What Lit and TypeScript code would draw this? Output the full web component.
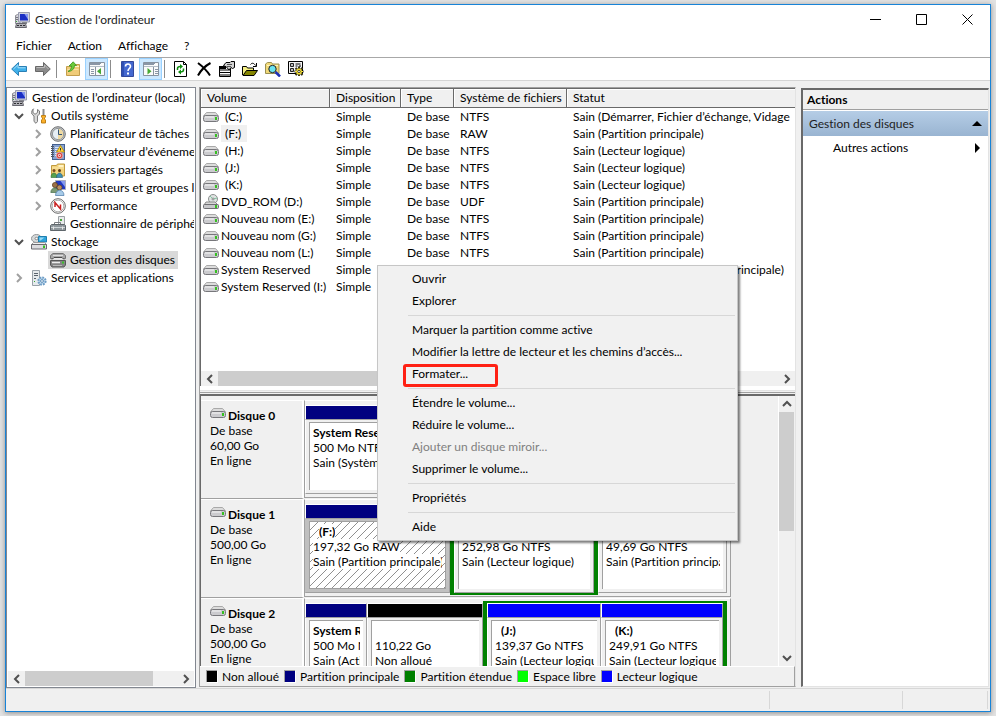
import { LitElement, html, svg, css, nothing, TemplateResult } from "lit";
import { customElement } from "lit/decorators.js";
import { classMap } from "lit/directives/class-map.js";
import { styleMap } from "lit/directives/style-map.js";

const icon = (body: unknown, w = 16, h = 16) =>
  html`<svg class="ico" width=${w} height=${h} viewBox="0 0 ${w} ${h}" aria-hidden="true">${body}</svg>`;

const computerIcon = icon(svg`
  <path d="M1.500 3.500l2-1H6v9H1.500z" fill="#d5d5dc" stroke="#8b8b93"/>
  <path d="M2 5.500h2M2 7.500h2" stroke="#77777f"/>
  <rect x="2" y="9" width="1" height="1" fill="#3a3"/>
  <path d="M4.500.5h11v9.500h-11z" fill="#d2d4de" stroke="#9a9db0"/>
  <path d="M6 2h8v6.500H6z" fill="#1b2fc4"/>
  <path d="M10.500 2H14v5.500z" fill="#8597ee"/>
  <path d="M8 10h5v2H8z" fill="#85878f"/>
  <path d="M2.500 11.500h9l1 4H1.500z" fill="#b0b0b6" stroke="#66666e"/>
  <path d="M3 13.500h2M6 13.500h2M9 13.500h2" stroke="#2f2f33"/>`);

const driveIcon = icon(svg`
  <path d="M3.500.5h9l3 3.500H.5z" fill="#dcdcdc" stroke="#a9a9a9"/>
  <rect x=".5" y="3.500" width="15" height="6" rx="2" fill="#cbcbce" stroke="#77777b"/>
  <path d="M2 5h9" stroke="#f8f8f8"/>
  <rect x="12" y="5" width="2" height="3" fill="#35c020"/>`, 16, 10);

const dvdIcon = icon(svg`
  <circle cx="10" cy="5" r="4.500" fill="#dfe3e2" stroke="#8d9190"/>
  <path d="M10 5L7 2M10 5l4-1" stroke="#7fc8a0"/>
  <circle cx="10" cy="5" r="1" fill="#fff" stroke="#888"/>
  <path d="M3 8h9l3 3H1z" fill="#d8d8d8" stroke="#8a8a8a"/>
  <rect x=".5" y="10.500" width="15" height="4" rx="1" fill="#c8c8cb" stroke="#6f6f73"/>
  <rect x="12" y="11" width="2" height="3" fill="#35c020"/>`, 16, 15);

const toolsIcon = icon(svg`
  <path d="M2.500.8L2 1.500v3l2 1.800L6.500 4.500v-3L8.500 3v3L6.500 8v5.500L5 15.300 3 13.500V8L.8 6V3z" fill="#d9d9d9" stroke="#707070" stroke-width=".9"/>
  <path d="M12.500 1v6" stroke="#8d8d8d" stroke-width="2"/>
  <path d="M10.500 7.500h4v1.500l-1 1v1l1 1v3h-4v-3l1-1v-1l-1-1z" fill="#fbb02a" stroke="#b8770a" stroke-width=".9"/>`);

const clockIcon = icon(svg`
  <circle cx="8" cy="8" r="7.300" fill="#c3c5c7" stroke="#6f7173"/>
  <circle cx="8" cy="8" r="5.600" fill="#e6eef5" stroke="#8f9497"/>
  <path d="M8 2.800a5.200 5.200 0 0 1 0 10.400z" fill="#eed9a2"/>
  <path d="M8.500 3.500v5H12" fill="none" stroke="#33557a"/>`);

const eventIcon = icon(svg`
  <rect x="2.500" y=".5" width="12" height="15" fill="#86a2d2" stroke="#44608f"/>
  <path d="M5 3.500h4M5 5.500h3M5 7.500h2M5 9.500h2M5 11.500h2" stroke="#dfe9f8"/>
  <path d="M1 2.500h3M1 4.500h3M1 6.500h3M1 8.500h3M1 10.500h3M1 12.500h3" stroke="#50555e"/>
  <path d="M10.500 1.500l4 6.500h-8z" fill="#ffd83a" stroke="#ab8300" stroke-width=".8"/>
  <path d="M10.500 4v2.500" stroke="#333"/>
  <circle cx="9.500" cy="11.500" r="3.200" fill="#d8352f" stroke="#f3c9c6" stroke-width=".7"/>
  <circle cx="9.500" cy="11.500" r="1.200" fill="none" stroke="#fff"/>`);

const sharedIcon = icon(svg`
  <path d="M1.500 3.500h5l1-1.500h7v12h-13z" fill="#f3d27a" stroke="#c09a3e"/>
  <path d="M8.500 3h5v2h-5z" fill="#fff3c4"/>
  <path d="M2 6h12" stroke="#fae7ac"/>
  <circle cx="4" cy="8.500" r="1.500" fill="#7a4b20"/>
  <path d="M1 15.500c0-6 6-6 6 0z" fill="#55a14e" stroke="#2f6a35" stroke-width=".6"/>
  <circle cx="9.500" cy="8.500" r="1.500" fill="#5d3a18"/>
  <path d="M6.500 15.500c0-6 6-6 6 0z" fill="#3f8fb0" stroke="#235e7a" stroke-width=".6"/>`);

const usersIcon = icon(svg`
  <path d="M5.500.5h10v9h-10z" fill="#2038c0" stroke="#a9adbf"/>
  <path d="M10.500 1H15v6z" fill="#8498ee"/>
  <circle cx="5" cy="5" r="2.600" fill="#9a7048" stroke="#5e3d1a" stroke-width=".7"/>
  <path d="M.8 12.500c0-6 8-6 8 0z" fill="#7d9a74" stroke="#44704a" stroke-width=".7"/>
  <circle cx="9.500" cy="7.500" r="2.500" fill="#b98f62" stroke="#5e3d1a" stroke-width=".7"/>
  <path d="M5.500 15.500c0-7 8.500-7 8.500 0z" fill="#a7cbe8" stroke="#4a7aa8" stroke-width=".7"/>`);

const perfIcon = icon(svg`
  <circle cx="8" cy="8" r="7.300" fill="#fafafa" stroke="#6a6a6a"/>
  <circle cx="8" cy="8" r="5.800" fill="#fff" stroke="#b0b0b0"/>
  <path d="M5 9V4.500l5.500 6.500V6.500" fill="none" stroke="#c81e1e" stroke-width="1.500"/>`);

const deviceIcon = icon(svg`
  <path d="M8.500.5h6v9h-6z" fill="#e9ebec" stroke="#9ba0a4"/>
  <path d="M10 3h2v2h-2z" fill="#4aa53c"/>
  <path d="M4.500 9V6.500h6V9" fill="none" stroke="#777b7f"/>
  <path d="M.5 9.500l1-1h13l1 1v5H.5z" fill="#8f979c" stroke="#5f666b"/>
  <path d="M1 11.500h14" stroke="#cfd5d8"/>
  <path d="M3 10.500h1v3H3zM12 10.500h1v3h-1z" fill="#e8e8e8"/>`);

const storageIcon = icon(svg`
  <ellipse cx="5.500" cy="4.500" rx="5" ry="4" fill="#d6d9da" stroke="#909496"/>
  <ellipse cx="5.500" cy="4.500" rx="1.500" ry="1.200" fill="#fff" stroke="#888"/>
  <path d="M7.500 2.500h8v5.500h-8z" fill="#2ea4dc" stroke="#1f7fae"/>
  <path d="M8.500 3.500h5l-4 3h-1z" fill="#9adaf5"/>
  <path d="M2.500 8.500h11l2 2H.5z" fill="#f1f1f1" stroke="#9a9a9a"/>
  <path d="M.5 10.500h15v4.500H.5z" fill="#dcdcdf" stroke="#6b6b70"/>
  <rect x="12" y="11.500" width="2" height="2.500" fill="#35c020"/>`);

const diskIcon = icon(svg`
  <path d="M3 1.500h10l2.500 2v3H.5v-3z" fill="#a8a8a8" stroke="#747474"/>
  <path d="M3 3.500h10" stroke="#dedede"/>
  <path d="M2 7.500L4 5.500h8l2 2" fill="#e8e8e8" stroke="#4a4a4a"/>
  <path d="M.5 8.500h15V13l-1.500 2H2L.5 13z" fill="#858585" stroke="#585858"/>
  <path d="M2 10.500h8" stroke="#ededed" stroke-width="1.500"/>
  <path d="M3 13.500h9" stroke="#b9b9b9"/>
  <rect x="12" y="9.500" width="2" height="2" fill="#39c428"/>`);

const servicesIcon = icon(svg`
  <path d="M1.500.5h7v15h-7z" fill="#e6eaed" stroke="#98a1a9"/>
  <path d="M3 3.500h4M3 5.500h4M3 8.500h2" stroke="#59636d"/>
  <rect x="3" y="11" width="1" height="1" fill="#3a3"/>
  <circle cx="11" cy="11" r="3.600" fill="#c4ddf0" stroke="#6d9cc5" stroke-width="2" stroke-dasharray="1.800 1"/>
  <circle cx="11" cy="11" r="1.400" fill="#fff" stroke="#5c8db8"/>`);

const backIcon = icon(svg`<path d="M7.500 1.500v4h8v5h-8v4L.7 8z" fill="#3fb0ea" stroke="#2a7fb5"/><path d="M2.500 8L7 3.800v3h7.500" fill="none" stroke="#a5def8"/>`);
const forwardIcon = icon(svg`<path d="M8.500 1.500v4h-8v5h8v4L15.300 8z" fill="#8b8b8b" stroke="#686868"/><path d="M1.500 6.500h8V4l4 4" fill="none" stroke="#bcbcbc"/>`);
const folderUpIcon = icon(svg`
  <path d="M1.500 5.500h5l1.500-2h6.500v11h-13z" fill="#f0cb78" stroke="#c39d4c"/>
  <path d="M9 5h5v1H9z" fill="#fff3c8"/>
  <path d="M2.500 8.500h11" stroke="#f9e2a6"/>
  <path d="M3 10.500C5.500 9 6.500 7.500 6.500 5H4L8.200.8 11.500 4.500H9.500c0 3.500-3 6-6.500 6z" fill="#6ccb3a" stroke="#3a9420" stroke-width=".8"/>`);
const paneIcon = (right: boolean) => icon(svg`
  <path d="M.5 1.500h15v13H.5z" fill="#fafafa" stroke="#8893a0"/>
  <path d="M1 2h11v2H1z" fill="#8a96a6"/><path d="M13 3.500h1M11 3.500h1" stroke="#fff"/>
  <path d="M1 5.500h14" stroke="#b4bdc8"/>
  ${right
    ? svg`<path d="M10.500 6v8" stroke="#8893a0"/><path d="M12 8.500h3M12 10.500h3M12 12.500h3" stroke="#8a96a6"/><path d="M4.500 7v6.500L8.500 10.200z" fill="#45a832"/>`
    : svg`<path d="M6.500 6v8" stroke="#8893a0"/><path d="M2 8.500h3M2 10.500h3M2 12.500h3" stroke="#8a96a6"/><path d="M12 7v6.500L8 10.200z" fill="#45a832"/>`}`);
const helpIcon = icon(svg`
  <path d="M2.500.5h12v15h-12z" fill="#4468cf" stroke="#33499b"/>
  <path d="M3 1h2v14H3z" fill="#2f4fb4"/>
  <path d="M6.500 5.500c0-3.200 5-3.200 5-.2 0 2.200-2.500 2.200-2.500 4.700" fill="none" stroke="#fff" stroke-width="1.600"/>
  <rect x="8" y="11.500" width="2" height="2" fill="#fff"/>`);
const refreshIcon = icon(svg`
  <path d="M1.500.5h9l3 3v12h-12z" fill="#fff" stroke="#000"/>
  <path d="M10.500.5v3h3" fill="none" stroke="#000"/>
  <path d="M4.500 9V7.500C4.500 6 5.500 5.500 7.500 5.500" fill="none" stroke="#0b8a0b" stroke-width="1.500"/><path d="M7 3v5l3-2.500z" fill="#0b8a0b"/>
  <path d="M10.500 7.500V9c0 1.500-1.500 2-3.500 2" fill="none" stroke="#0b8a0b" stroke-width="1.500"/><path d="M8 8.500v5L5 11z" fill="#0b8a0b"/>`);
const deleteIcon = icon(svg`<path d="M2 2C6 5 10.500 9 14 14.500M14.500 2C9 5 5 9 2 14.500" fill="none" stroke="#000" stroke-width="2"/>`);
const propsIcon = icon(svg`
  <path d="M.5 5.500h11v10H.5z" fill="#fff" stroke="#000"/>
  <path d="M0 5h7v3H0zM1 8.500h10v1H1zM1 11h10v1H1zM1 13.500h10v1H1z"/>
  <path d="M4.500 4.500l2.500-3h4l1-1h3.500v6l-2 1-1.500-1-2 2.500-2.500-3z" fill="#d2d2d2" stroke="#000"/>
  <path d="M8 3.500h5M8 5.500h4" stroke="#555"/>`);
const openIcon = icon(svg`
  <path d="M.5 14V5.500h4l1 1.500h6v2.500" fill="#f4ee84" stroke="#000"/>
  <path d="M1 14.500l3.500-5h11l-3.500 5z" fill="#858500" stroke="#000"/>
  <path d="M8.500 3.500c1.500-2 3.500-1.500 5 1M14.500 2v3.500H11" fill="none" stroke="#000"/>`);
const searchIcon = icon(svg`
  <path d="M.5 12.500V3l2-1.500h4l1 1.500h6.500v9.500z" fill="#f0d878" stroke="#9b9052"/>
  <path d="M2 4.500h11" stroke="#fff6bd"/>
  <circle cx="7.500" cy="8" r="3.700" fill="#69e4f2" stroke="#222"/>
  <path d="M10.500 11l4.500 4.500" stroke="#1b2eb8" stroke-width="2.500"/>`);
const settingsIcon = icon(svg`
  <path d="M.5.5h14v12H.5z" fill="#f4f4f4" stroke="#000"/>
  <path d="M2.500 2.500h3v3h-3zM2.500 7.500h3v3h-3z" fill="#bbb" stroke="#222"/>
  <path d="M7.500 3h5M7.500 5h2M11 5h2" stroke="#000"/>
  <path d="M11 5.500v9.500M6.500 10.500h9M7.500 7l7 7M14.500 7l-7 7" stroke="#000" stroke-width="2"/>
  <path d="M11 6.500v8M7 10.500h8M8 7.500l6 6M14 7.500l-6 6" stroke="#f6e234"/>
  <circle cx="11" cy="10.500" r="2.800" fill="#f6e234"/>
  <circle cx="11" cy="10.500" r="1.200" fill="#fff" stroke="#000" stroke-width=".7"/>`);

const chevron = (dir: "left" | "right" | "up" | "down", cls = "") => {
  const d = { left: "M7 1L3 5l4 4", right: "M3 1l4 4-4 4", up: "M1 7l4-4 4 4", down: "M1 3l4 4 4-4" }[dir];
  return html`<svg class="chev ${cls}" width="10" height="10" viewBox="0 0 10 10" aria-hidden="true"><path d=${d} /></svg>`;
};

interface TreeNode { label: string; level: number; art: TemplateResult; state?: "open" | "closed"; selected?: boolean; }
const TREE: TreeNode[] = [
  { label: "Gestion de l’ordinateur (local)", level: 0, art: computerIcon },
  { label: "Outils système", level: 1, art: toolsIcon, state: "open" },
  { label: "Planificateur de tâches", level: 2, art: clockIcon, state: "closed" },
  { label: "Observateur d’événements", level: 2, art: eventIcon, state: "closed" },
  { label: "Dossiers partagés", level: 2, art: sharedIcon, state: "closed" },
  { label: "Utilisateurs et groupes locaux", level: 2, art: usersIcon, state: "closed" },
  { label: "Performance", level: 2, art: perfIcon, state: "closed" },
  { label: "Gestionnaire de périphériques", level: 2, art: deviceIcon },
  { label: "Stockage", level: 1, art: storageIcon, state: "open" },
  { label: "Gestion des disques", level: 2, art: diskIcon, selected: true },
  { label: "Services et applications", level: 1, art: servicesIcon, state: "closed" },
];

interface Volume { name: string; fs: string; status: string; kind?: "dvd"; active?: boolean; }
const VOLUMES: Volume[] = [
  { name: "(C:)", fs: "NTFS", status: "Sain (Démarrer, Fichier d’échange, Vidage" },
  { name: "(F:)", fs: "RAW", status: "Sain (Partition principale)", active: true },
  { name: "(H:)", fs: "NTFS", status: "Sain (Lecteur logique)" },
  { name: "(J:)", fs: "NTFS", status: "Sain (Lecteur logique)" },
  { name: "(K:)", fs: "NTFS", status: "Sain (Lecteur logique)" },
  { name: "DVD_ROM (D:)", fs: "UDF", status: "Sain (Partition principale)", kind: "dvd" },
  { name: "Nouveau nom (E:)", fs: "NTFS", status: "Sain (Partition principale)" },
  { name: "Nouveau nom (G:)", fs: "NTFS", status: "Sain (Partition principale)" },
  { name: "Nouveau nom (L:)", fs: "NTFS", status: "Sain (Partition principale)" },
  { name: "System Reserved", fs: "", status: "Sain (Système, Actif, Partition principale)" },
  { name: "System Reserved (I:)", fs: "", status: "" },
];

type Kind = "primary" | "free" | "logical";
interface Partition { name: string; size: string; status: string; kind: Kind; weight: number; active?: boolean; }
interface Extended { weight: number; parts: Partition[]; }
interface Disk { name: string; size: string; parts: (Partition | Extended)[]; }
const DISKS: Disk[] = [
  { name: "Disque 0", size: "60,00 Go", parts: [
    { name: "System Reserved", size: "500 Mo NTFS", status: "Sain (Système, Actif)", kind: "primary", weight: 145 },
    { name: "", size: "", status: "", kind: "primary", weight: 277 },
  ] },
  { name: "Disque 1", size: "500,00 Go", parts: [
    { name: "(F:)", size: "197,32 Go RAW", status: "Sain (Partition principale)", kind: "primary", weight: 145, active: true },
    { weight: 148, parts: [{ name: "", size: "252,98 Go NTFS", status: "Sain (Lecteur logique)", kind: "logical", weight: 148 }] },
    { name: "", size: "49,69 Go NTFS", status: "Sain (Partition principale)", kind: "primary", weight: 129 },
  ] },
  { name: "Disque 2", size: "500,00 Go", parts: [
    { name: "System Reserved", size: "500 Mo NTFS", status: "Sain (Actif)", kind: "primary", weight: 62 },
    { name: "", size: "110,22 Go", status: "Non alloué", kind: "free", weight: 116 },
    { weight: 244, parts: [
      { name: "(J:)", size: "139,37 Go NTFS", status: "Sain (Lecteur logique)", kind: "logical", weight: 114 },
      { name: "(K:)", size: "249,91 Go NTFS", status: "Sain (Lecteur logique)", kind: "logical", weight: 122 },
    ] },
  ] },
];

const columns = (parts: { weight: number }[]) =>
  styleMap({ gridTemplateColumns: parts.map((p) => `minmax(0, ${p.weight}fr)`).join(" ") });

const LEGEND: [string, string][] = [
  ["black", "Non alloué"], ["navy", "Partition principale"], ["green", "Partition étendue"],
  ["lime", "Espace libre"], ["blue", "Lecteur logique"],
];

type MenuEntry = { label: string; disabled?: boolean; marked?: boolean } | null;
const MENU: MenuEntry[] = [
  { label: "Ouvrir" }, { label: "Explorer" }, null,
  { label: "Marquer la partition comme active" },
  { label: "Modifier la lettre de lecteur et les chemins d’accès..." },
  { label: "Formater...", marked: true }, null,
  { label: "Étendre le volume..." }, { label: "Réduire le volume..." },
  { label: "Ajouter un disque miroir...", disabled: true },
  { label: "Supprimer le volume..." }, null,
  { label: "Propriétés" }, null,
  { label: "Aide" },
];

const base = css`
  :host, *, *::before, *::after { box-sizing: border-box; }
  button { font: inherit; color: inherit; background: none; border: 0; padding: 0; margin: 0; text-align: left; }
  svg { display: block; flex: none; }
  .chev path { fill: none; stroke: #505050; stroke-width: 2; }
`;

@customElement("scroll-track")
class ScrollTrack extends LitElement {
  static properties = { vertical: { type: Boolean, reflect: true }, size: { type: Number } };
  declare vertical: boolean;
  declare size: number;
  static styles = [base, css`
    :host { display: flex; flex: none; height: 15px; background: #f0f0f0; }
    :host([vertical]) { flex-direction: column; width: 15px; height: auto; }
    button { flex: none; width: 17px; height: 15px; display: flex; align-items: center; justify-content: center; }
    :host([vertical]) button { width: 15px; height: 16px; }
    .rail { flex: 1; min-width: 0; min-height: 0; }
    .thumb { background: #cdcdcd; width: 100%; height: 100%; }
  `];
  render() {
    const pct = `${this.size}%`;
    return html`
      <button aria-label="Précédent">${chevron(this.vertical ? "up" : "left")}</button>
      <div class="rail"><div class="thumb" style=${styleMap(this.vertical ? { height: pct } : { width: pct })}></div></div>
      <button aria-label="Suivant">${chevron(this.vertical ? "down" : "right")}</button>`;
  }
}

@customElement("disk-map")
class DiskMap extends LitElement {
  static styles = [base, css`
    :host { display: block; flex: 1; min-width: 0; overflow: hidden; padding-top: 4px; }
    .disk { display: flex; height: 99px; }
    .label { width: 103px; flex: none; padding: 7px 0 0 9px; line-height: 15px; border-top: 1px solid #fff; border-bottom: 1px solid #a0a0a0; border-right: 2px solid #fff; }
    .name { display: flex; gap: 2px; font-weight: 700; }
    .graph { flex: 1; min-width: 0; height: 98px; margin-right: 47px; display: grid; padding: 2px 3px 1px 0; border: 1px solid #a0a0a0; border-top-color: #fff; }
    .part { min-width: 0; margin: 2px 0; display: flex; flex-direction: column; }
    .extended { min-width: 0; display: grid; background: #008000; padding: 2px 4px; }
    .extended .part { margin: 0; background: #f0f0f0; }
    .bar { height: 15px; flex: none; border: 1px solid #fff; border-right-color: #a0a0a0; border-bottom-color: #a0a0a0; }
    .primary { background: #000080; }
    .free { background: #000; }
    .logical { background: #0000ff; }
    .frame { flex: 1; min-height: 0; display: flex; padding: 2px 3px 3px; border: 1px solid #fff; border-top: 0; border-right-color: #a0a0a0; border-bottom-color: #a0a0a0; }
    .active .frame { background: #c0c0c0; border-left-color: #c0c0c0; }
    .box { flex: 1; min-width: 0; position: relative; background: #fff; border: 0 solid #a0a0a0; border-width: 1px 0 0 1px; padding: 2px 3px 0; line-height: 15px; white-space: nowrap; overflow: hidden; }
    .active .box { border-width: 1px; }
    .text { position: relative; max-width: 100%; width: fit-content; height: 15px; overflow: hidden; }
    .active .text { background: #fff; }
    .title { font-weight: 700; }
    .letter { margin-left: 6px; }
    .hatch { position: absolute; inset: 0; width: 100%; height: 100%; }
  `];
  part(p: Partition): TemplateResult {
    return html`
      <div class=${classMap({ part: true, active: !!p.active })}>
        <div class="bar ${p.kind}"></div>
        <div class="frame"><div class="box">
          ${p.active ? html`<svg class="hatch" aria-hidden="true">
            <defs><pattern id="stripes" width="8" height="8" patternUnits="userSpaceOnUse"><path d="M-1 1L1-1M0 8L8 0M7 9L9 7" stroke="#909090" stroke-width="1"/></pattern></defs>
            <rect width="100%" height="100%" fill="url(#stripes)"/></svg>` : nothing}
          <div class=${classMap({ text: true, title: true, letter: p.name.startsWith("(") })}>${p.name}</div>
          <div class="text">${p.size}</div>
          <div class="text">${p.status}</div>
        </div></div>
      </div>`;
  }
  render() {
    return DISKS.map((d) => html`
      <section class="disk">
        <div class="label">
          <div class="name">${driveIcon}<span>${d.name}</span></div>
          <div>De base</div><div>${d.size}</div><div>En ligne</div>
        </div>
        <div class="graph" style=${columns(d.parts)}>
          ${d.parts.map((p) => "parts" in p
            ? html`<div class="extended" style=${columns(p.parts)}>${p.parts.map((q) => this.part(q))}</div>`
            : this.part(p))}
        </div>
      </section>`);
  }
}

@customElement("context-menu")
class ContextMenu extends LitElement {
  static styles = [base, css`
    :host { display: block; background: #f1f1f1; border: 1px solid #c6c6c6; padding: 2px; box-shadow: 2px 2px 2px #00000080; }
    .item { display: block; position: relative; width: 100%; height: 22px; line-height: 22px; padding-left: 32px; white-space: nowrap; }
    .item:disabled { color: #808080; }
    .marked::after { content: ""; position: absolute; left: 23px; top: 1px; width: 95px; height: 23px; border: 3px solid #ff2114; border-radius: 3px; }
    hr { border: 0; height: 1px; margin: 3px 0 3px 28px; background: #d7d7d7; }
  `];
  render() {
    return MENU.map((m) => m
      ? html`<button role="menuitem" class=${classMap({ item: true, marked: !!m.marked })} ?disabled=${!!m.disabled}>${m.label}</button>`
      : html`<hr />`);
  }
}

@customElement("app-root")
class AppRoot extends LitElement {
  static styles = [base, css`
    :host { display: block; height: 100vh; padding: 4px 5px; background: #e2e2e2; color: #000; font: 12px/16px Lato, "Open Sans", sans-serif; font-variant-ligatures: none; }
    .window { height: 100%; display: flex; flex-direction: column; background: #f0f0f0; border: 1px solid #1883d7; box-shadow: 0 1px 5px #00000060; }
    .title { display: flex; align-items: center; height: 29px; flex: none; background: #fff; padding-left: 8px; }
    .title h1 { margin: 0 0 0 5px; font: inherit; flex: 1; color: #222; }
    .title button { width: 46px; height: 29px; display: flex; align-items: center; justify-content: center; }
    .title button path { fill: none; stroke: #000; }
    .menus { display: flex; height: 23px; flex: none; background: #fff; padding-left: 10px; gap: 16px; align-items: center; }
    .tools { display: flex; height: 24px; flex: none; align-items: center; background: #fff; border-top: 1px solid #a8a8a8; border-bottom: 1px solid #d4d4d4; padding-left: 1px; }
    .group { display: flex; gap: 1px; }
    .group + .group::before { content: ""; width: 1px; height: 18px; margin: 0 3px 0 2px; background: #8c8c8c; align-self: center; }
    .group + .tight::before { margin-right: 4px; }
    .tight { gap: 0; }
    .tool { width: 23px; height: 22px; display: flex; align-items: center; justify-content: center; }
    .on { background: #cce8ff; border: 1px solid #99d1ff; }
    .panes { flex: 1; min-height: 0; display: grid; grid-template: minmax(0, 1fr) / 190px minmax(0, 1fr) 188px; padding: 6px 1px 0 0; }
    .tree { display: flex; flex-direction: column; min-width: 0; background: #fff; border: 1px solid #828790; padding: 1px; }
    .nodes { list-style: none; margin: 0; padding: 0; flex: 1; overflow: hidden; }
    .node { display: flex; align-items: center; height: 18px; }
    .twist { width: 20px; flex: none; display: flex; justify-content: center; }
    .closed path { stroke: #a0a0a0; }
    .l0 { padding-left: 1px; }
    .l1 { padding-left: 1px; }
    .l2 { padding-left: 20px; }
    .caption { white-space: nowrap; line-height: 18px; padding: 0 3px 0 4px; }
    .pick { display: flex; align-items: center; height: 18px; padding-left: 2px; }
    .l0 .caption { padding-left: 5px; }
    .selected { background: #d9d9d9; }
    .center { display: flex; flex-direction: column; min-width: 0; margin: 0 5px 1px 3px; border: 1px solid #a0a0a0; border-right-color: #e3e3e3; }
    .list { height: 298px; flex: none; display: flex; flex-direction: column; background: #fff; border: 1px solid #696969; border-width: 1px 0 0 1px; }
    .rows { flex: 1; min-height: 0; overflow: hidden; }
    table { width: 100%; table-layout: fixed; border-collapse: separate; border-spacing: 0; }
    th, td { padding: 0 0 0 6px; font-weight: 400; text-align: left; white-space: nowrap; overflow: hidden; }
    th { height: 19px; line-height: 16px; background: #f0f0f0; border: 0 solid #696969; border-width: 0 1px 1px 0; box-shadow: inset 1px 1px #fff; }
    th:last-child { border-right: 0; }
    td { height: 17px; line-height: 17px; }
    td:first-child { padding-left: 2px; }
    .c1 { width: 129px; } .c2 { width: 71px; } .c3 { width: 53px; } .c4 { width: 113px; }
    .vol { display: flex; align-items: center; gap: 2px; }
    .letter { padding: 0 6px 0 4px; }
    .letter.active { background: #f0f0f0; }
    .split { height: 10px; flex: none; border-bottom: 2px solid #696969; background: linear-gradient(#fff 4px, #e3e3e3 4px 5px, #f0f0f0 5px 6px, #a0a0a0 6px 7px, #f0f0f0 7px); }
    .disks { flex: 1; min-height: 0; display: flex; border-left: 1px solid #696969; padding-right: 1px; }
    .disks scroll-track { border-left: 1px solid #fff; width: 16px; }
    .legend { flex: none; height: 20px; display: flex; align-items: center; gap: 6px; padding-left: 7px; border: 1px solid #a0a0a0; border-width: 1px 1px 0 0; border-top-color: #fff; white-space: nowrap; }
    .key { display: flex; align-items: center; gap: 4px; }
    .swatch { width: 11px; height: 12px; border: 1px solid #fff; border-width: 0 1px 1px 0; box-shadow: -1px -1px #a0a0a0; }
    .black { background: #000; } .navy { background: #000080; } .green { background: #008000; } .lime { background: #00ff00; } .blue { background: #0000ff; }
    .actions { background: #fff; margin: 1px 0; border: 1px solid #e3e3e3; border-top: 2px solid #696969; border-left: 2px solid #696969; }
    .actions h2 { margin: 0; height: 20px; font: inherit; font-weight: 700; line-height: 20px; padding-left: 4px; background: #f0f0f0; border-bottom: 1px solid #a0a0a0; }
    .topic { display: flex; align-items: center; justify-content: space-between; width: 100%; height: 26px; padding: 0 6px; background: linear-gradient(#b5cde6, #99b4d1); border-top: 1px solid #fff; color: #1e1e1e; }
    .more { display: flex; align-items: center; justify-content: space-between; width: 100%; height: 24px; padding: 0 6px 0 30px; }
    .status { height: 23px; flex: none; display: flex; justify-content: flex-end; border-top: 1px solid #d7d7d7; padding-right: 2px; }
    .cell { border-right: 1px solid #d7d7d7; margin: 2px 0; }
    .w1 { width: 133px; } .w2 { width: 85px; } .w0 { flex: 1; }
    context-menu { position: absolute; left: 377px; top: 265px; width: 361px; }
  `];

  node(n: TreeNode) {
    return html`<li class="node l${n.level}" role="treeitem" aria-selected=${n.selected ? "true" : "false"}>
      ${n.level ? html`<span class="twist">${n.state ? chevron(n.state === "open" ? "down" : "right", n.state) : nothing}</span>` : nothing}
      <button class=${classMap({ pick: true, selected: !!n.selected })}>${n.art}<span class="caption">${n.label}</span></button>
    </li>`;
  }

  tool(label: string, art: TemplateResult, on = false) {
    return html`<button class=${classMap({ tool: true, on })} aria-label=${label}>${art}</button>`;
  }

  render() {
    return html`
      <div class="window">
        <header class="title">
          ${computerIcon}<h1>Gestion de l'ordinateur</h1>
          <button aria-label="Réduire"><svg width="11" height="11"><path d="M0 5.500h11" /></svg></button>
          <button aria-label="Agrandir"><svg width="11" height="11"><path d="M.5.5h10v10H.5z" /></svg></button>
          <button aria-label="Fermer"><svg width="11" height="11"><path d="M.5.5l10 10M10.500.5l-10 10" /></svg></button>
        </header>
        <nav class="menus">
          <button>Fichier</button><button>Action</button><button>Affichage</button><button>?</button>
        </nav>
        <div class="tools" role="toolbar">
          <div class="group">${this.tool("Précédent", backIcon)}${this.tool("Suivant", forwardIcon)}</div>
          <div class="group">${this.tool("Dossier parent", folderUpIcon)}${this.tool("Arborescence", paneIcon(false), true)}</div>
          <div class="group">${this.tool("Aide", helpIcon)}${this.tool("Volet Actions", paneIcon(true), true)}</div>
          <div class="group tight">
            ${this.tool("Actualiser", refreshIcon)}${this.tool("Supprimer", deleteIcon)}${this.tool("Propriétés", propsIcon)}
            ${this.tool("Ouvrir", openIcon)}${this.tool("Rechercher", searchIcon)}${this.tool("Paramètres", settingsIcon)}
          </div>
        </div>
        <div class="panes">
          <aside class="tree">
            <ul class="nodes" role="tree">${TREE.map((n) => this.node(n))}</ul>
            <scroll-track .size=${84}></scroll-track>
          </aside>
          <main class="center">
            <div class="list">
              <div class="rows">
                <table>
                  <colgroup><col class="c1" /><col class="c2" /><col class="c3" /><col class="c4" /><col /></colgroup>
                  <thead><tr><th>Volume</th><th>Disposition</th><th>Type</th><th>Système de fichiers</th><th>Statut</th></tr></thead>
                  <tbody>${VOLUMES.map((v) => html`<tr>
                    <td><div class="vol">${v.kind === "dvd" ? dvdIcon : driveIcon}<span class=${classMap({ letter: v.name.startsWith("("), active: !!v.active })}>${v.name}</span></div></td>
                    <td>Simple</td><td>${v.fs ? "De base" : nothing}</td><td>${v.fs}</td><td>${v.status}</td>
                  </tr>`)}</tbody>
                </table>
              </div>
              <scroll-track .size=${70}></scroll-track>
            </div>
            <div class="split"></div>
            <div class="disks"><disk-map></disk-map><scroll-track vertical .size=${50}></scroll-track></div>
            <div class="legend">${LEGEND.map(([c, t]) => html`<span class="key"><i class="swatch ${c}"></i>${t}</span>`)}</div>
          </main>
          <aside class="actions">
            <h2>Actions</h2>
            <button class="topic">Gestion des disques<svg width="10" height="5"><path d="M0 5L5 0l5 5z" /></svg></button>
            <button class="more">Autres actions<svg width="8" height="10"><path d="M1 0l5 5-5 5z" /></svg></button>
          </aside>
        </div>
        <footer class="status"><div class="cell w0"></div><div class="cell w1"></div><div class="cell w2"></div></footer>
      </div>
      <context-menu role="menu"></context-menu>`;
  }
}
